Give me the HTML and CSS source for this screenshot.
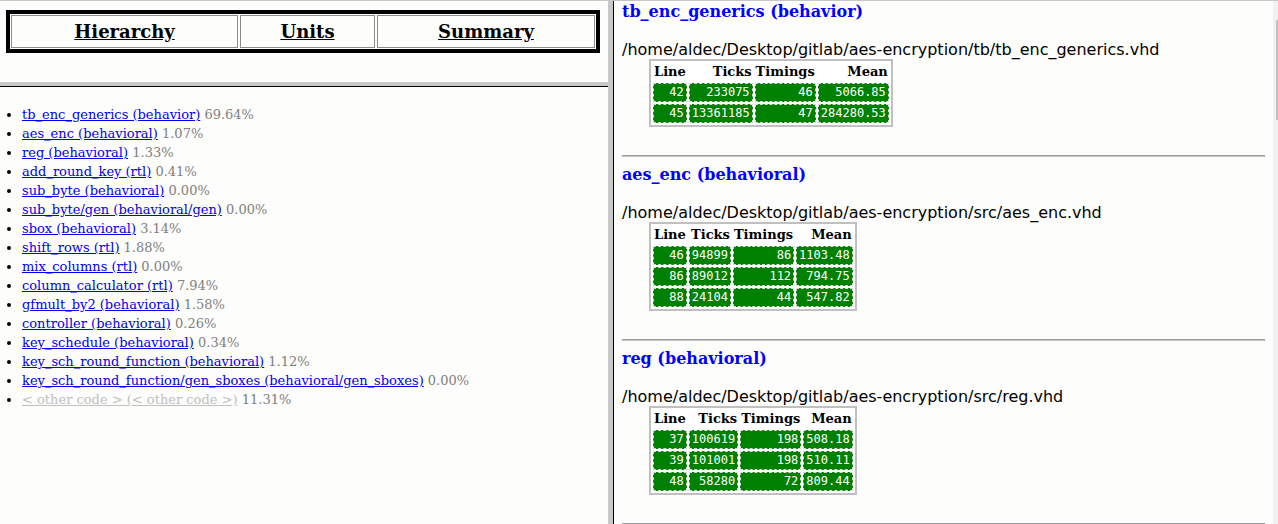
FILE: index.html
```html
<!DOCTYPE html>
<html>
<head>
<meta charset="utf-8">
<title>Profiler report</title>
<link rel="stylesheet" href="styles.css">
</head>
<body>
<div class="topline"></div>
<div class="page">
  <div class="left">
    <div class="nav-frame">
      <div class="nav">
        <div class="nav-cell c1"><a href="#">Hierarchy</a></div>
        <div class="nav-cell c2"><a href="#">Units</a></div>
        <div class="nav-cell c3"><a href="#">Summary</a></div>
      </div>
    </div>
    <div class="hdivider"></div>
    <div class="list-frame">
      <ul class="units">
        <li><a href="#">tb_enc_generics (behavior)</a> <span class="pct">69.64%</span></li>
        <li><a href="#">aes_enc (behavioral)</a> <span class="pct">1.07%</span></li>
        <li><a href="#">reg (behavioral)</a> <span class="pct">1.33%</span></li>
        <li><a href="#">add_round_key (rtl)</a> <span class="pct">0.41%</span></li>
        <li><a href="#">sub_byte (behavioral)</a> <span class="pct">0.00%</span></li>
        <li><a href="#">sub_byte/gen (behavioral/gen)</a> <span class="pct">0.00%</span></li>
        <li><a href="#">sbox (behavioral)</a> <span class="pct">3.14%</span></li>
        <li><a href="#">shift_rows (rtl)</a> <span class="pct">1.88%</span></li>
        <li><a href="#">mix_columns (rtl)</a> <span class="pct">0.00%</span></li>
        <li><a href="#">column_calculator (rtl)</a> <span class="pct">7.94%</span></li>
        <li><a href="#">gfmult_by2 (behavioral)</a> <span class="pct">1.58%</span></li>
        <li><a href="#">controller (behavioral)</a> <span class="pct">0.26%</span></li>
        <li><a href="#">key_schedule (behavioral)</a> <span class="pct">0.34%</span></li>
        <li><a href="#">key_sch_round_function (behavioral)</a> <span class="pct">1.12%</span></li>
        <li><a href="#">key_sch_round_function/gen_sboxes (behavioral/gen_sboxes)</a> <span class="pct">0.00%</span></li>
        <li><a href="#" class="other">&lt; other code &gt; (&lt; other code &gt;)</a> <span class="pct">11.31%</span></li>
      </ul>
    </div>
  </div>
  <div class="vdivider"></div>
  <div class="right">
    <div class="right-content">
      <section class="unit first">
        <h3 class="unit-title">tb_enc_generics (behavior)</h3>
        <p class="path">/home/aldec/Desktop/gitlab/aes-encryption/tb/tb_enc_generics.vhd</p>
        <table class="lines">
          <tr><th>Line</th><th>Ticks</th><th>Timings</th><th>Mean</th></tr>
          <tr><td>42</td><td>233075</td><td>46</td><td>5066.85</td></tr>
          <tr><td>45</td><td>13361185</td><td>47</td><td>284280.53</td></tr>
        </table>
      </section>
      <hr class="sep">
      <section class="unit">
        <h3 class="unit-title">aes_enc (behavioral)</h3>
        <p class="path">/home/aldec/Desktop/gitlab/aes-encryption/src/aes_enc.vhd</p>
        <table class="lines">
          <tr><th>Line</th><th>Ticks</th><th>Timings</th><th>Mean</th></tr>
          <tr><td>46</td><td>94899</td><td>86</td><td>1103.48</td></tr>
          <tr><td>86</td><td>89012</td><td>112</td><td>794.75</td></tr>
          <tr><td>88</td><td>24104</td><td>44</td><td>547.82</td></tr>
        </table>
      </section>
      <hr class="sep">
      <section class="unit">
        <h3 class="unit-title">reg (behavioral)</h3>
        <p class="path">/home/aldec/Desktop/gitlab/aes-encryption/src/reg.vhd</p>
        <table class="lines">
          <tr><th>Line</th><th>Ticks</th><th>Timings</th><th>Mean</th></tr>
          <tr><td>37</td><td>100619</td><td>198</td><td>508.18</td></tr>
          <tr><td>39</td><td>101001</td><td>198</td><td>510.11</td></tr>
          <tr><td>48</td><td>58280</td><td>72</td><td>809.44</td></tr>
        </table>
      </section>
      <hr class="sep">
    </div>
    <div class="scrollbar"><div class="thumb"></div></div>
  </div>
</div>
</body>
</html>
```
FILE: styles.css
```css
html, body {
  margin: 0;
  padding: 0;
  background: #fdfdfb;
  overflow: hidden;
}
body {
  width: 1278px;
  height: 524px;
  font-family: "DejaVu Serif", serif;
  color: #000;
}
.topline {
  height: 1px;
  background: #c6c6c6;
}
.page {
  display: flex;
  height: 523px;
}
.left {
  width: 608px;
  display: flex;
  flex-direction: column;
}
.nav-frame {
  height: 81px;
  padding: 9px 0 0 6px;
  box-sizing: border-box;
}
.nav {
  display: flex;
  gap: 2px;
  width: 594px;
  box-sizing: border-box;
  border: 4px solid #000;
  padding: 1px;
}
.nav-cell {
  height: 33px;
  box-sizing: border-box;
  border: 1px solid #8c8c8c;
  display: flex;
  align-items: center;
  justify-content: center;
}
.c1 { width: 227px; }
.c2 { width: 135px; }
.c3 { flex: 1; }
.nav-cell a {
  color: #000;
  font-weight: bold;
  font-size: 18px;
  text-decoration: underline;
}
.hdivider {
  height: 4px;
  background: #c8c8c8;
  border-bottom: 1px solid #000;
}
.list-frame {
  flex: 1;
  padding: 18px 0 0 8px;
}
.units {
  margin: 0;
  padding-left: 14px;
  list-style: disc;
  font-size: 13px;
  line-height: 19px;
}
.units a {
  color: #0000ee;
  text-decoration: underline;
}
.units a.other {
  color: #c0c0c0;
}
.pct {
  color: #808080;
}
.vdivider {
  width: 5px;
  background: #c8c8c8;
  border-right: 1px solid #000;
}
.right {
  flex: 1;
  position: relative;
  overflow: hidden;
}
.right-content {
  padding: 0 13px 0 8px;
}
.unit-title {
  margin: 8px 0 0;
  font-size: 16px;
  line-height: 20px;
  color: #0000ff;
}
.unit.first .unit-title {
  margin-top: 1px;
}
.path {
  margin: 18px 0 0;
  font-family: "DejaVu Sans", sans-serif;
  font-size: 16px;
  line-height: 19px;
}
.lines {
  margin: 0 0 0 27px;
  border: 2px solid #c0c0c0;
  border-spacing: 2px;
  background: #fff;
}
.lines th {
  font-size: 13px;
  line-height: 16px;
  padding: 1px 1px;
  text-align: right;
}
.lines td {
  background: #008000;
  color: #fff;
  font-family: "DejaVu Sans Mono", monospace;
  font-size: 12px;
  line-height: 15px;
  padding: 1px 2px;
  border: 1px dashed #d8d8d8;
  text-align: right;
}
.sep {
  margin: 28px 0 0;
  height: 0;
  border: none;
  border-top: 1px solid #9a9a9a;
  border-bottom: 1px solid #c4c4c4;
}
.scrollbar {
  position: absolute;
  top: 0;
  right: 0;
  width: 5px;
  height: 100%;
  background: #f1f1f1;
}
.thumb {
  position: absolute;
  top: 19px;
  right: 0;
  width: 2px;
  height: 100px;
  background: #c1c1c1;
}
```
